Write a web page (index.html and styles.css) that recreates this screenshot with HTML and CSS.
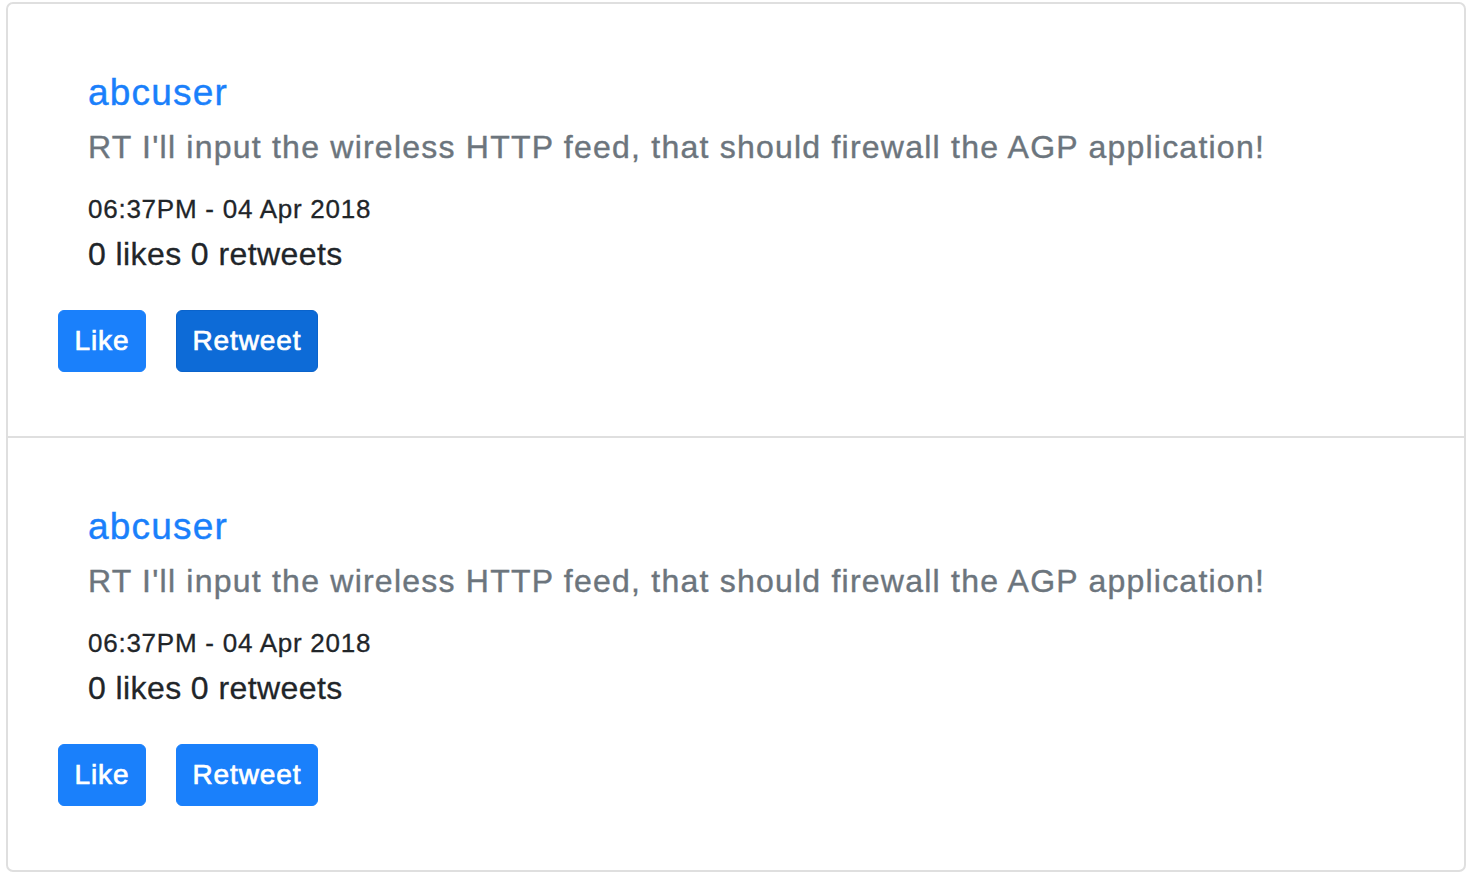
FILE: index.html
```html
<!DOCTYPE html>
<html lang="en">
<head>
<meta charset="utf-8">
<title>Tweets</title>
<link rel="stylesheet" href="styles.css">
</head>
<body>
<div class="page">
  <ul class="list">
    <li class="item">
      <div class="tweet">
        <h4 class="user">abcuser</h4>
        <h5 class="text">RT I'll input the wireless HTTP feed, that should firewall the AGP application!</h5>
        <p class="date">06:37PM - 04 Apr 2018</p>
        <h5 class="stats">0 likes 0 retweets</h5>
      </div>
      <div class="actions">
        <button class="btn">Like</button>
        <button class="btn btn-active">Retweet</button>
      </div>
    </li>
    <li class="item">
      <div class="tweet">
        <h4 class="user">abcuser</h4>
        <h5 class="text">RT I'll input the wireless HTTP feed, that should firewall the AGP application!</h5>
        <p class="date">06:37PM - 04 Apr 2018</p>
        <h5 class="stats">0 likes 0 retweets</h5>
      </div>
      <div class="actions">
        <button class="btn">Like</button>
        <button class="btn">Retweet</button>
      </div>
    </li>
  </ul>
</div>
</body>
</html>
```

FILE: styles.css
```css
* { box-sizing: border-box; }

html, body {
  margin: 0;
  padding: 0;
  background: #ffffff;
}

body {
  font-family: "Liberation Sans", Arial, Helvetica, sans-serif;
  color: #212529;
}

.page {
  padding: 2px 8px 4px 6px;
}

.list {
  list-style: none;
  margin: 0;
  padding: 0;
  border: 2px solid #dfdfdf;
  border-radius: 7px;
  display: flex;
  flex-direction: column;
}

.item {
  height: 432px;
  padding: 67px 0 0 50px;
  display: flex;
  flex-direction: column;
}

.item + .item {
  border-top: 2px solid #dfdfdf;
  height: 434px;
}

.tweet {
  padding-left: 30px;
  display: flex;
  flex-direction: column;
}

.user {
  margin: 0;
  font-size: 37px;
  line-height: 44px;
  font-weight: 400;
  letter-spacing: 1.2px;
  color: #1a80fb;
  -webkit-text-stroke: 0.4px #1a80fb;
}

.text {
  margin: 12px 0 0;
  font-size: 32px;
  line-height: 40px;
  font-weight: 400;
  letter-spacing: 1.23px;
  color: #6c757d;
  white-space: nowrap;
  -webkit-text-stroke: 0.4px #6c757d;
}

.date {
  margin: 26px 0 0;
  font-size: 26px;
  line-height: 32px;
  letter-spacing: 0.75px;
  color: #212529;
  -webkit-text-stroke: 0.3px #212529;
}

.stats {
  margin: 9px 0 0;
  font-size: 32px;
  line-height: 40px;
  font-weight: 400;
  letter-spacing: 0.41px;
  color: #212529;
  -webkit-text-stroke: 0.3px #212529;
}

.actions {
  margin-top: 36px;
  display: flex;
  gap: 30px;
}

.btn {
  height: 62px;
  padding: 0 15.5px;
  font-family: "Liberation Sans", Arial, Helvetica, sans-serif;
  font-size: 28px;
  line-height: 1;
  letter-spacing: 0.9px;
  color: #ffffff;
  -webkit-text-stroke: 0.7px #ffffff;
  background: #1a80fb;
  border: 1px solid #1a80fb;
  border-radius: 6px;
  cursor: pointer;
}

.btn-active {
  background: #0d6bd7;
  border-color: #0a63cb;
}
```
